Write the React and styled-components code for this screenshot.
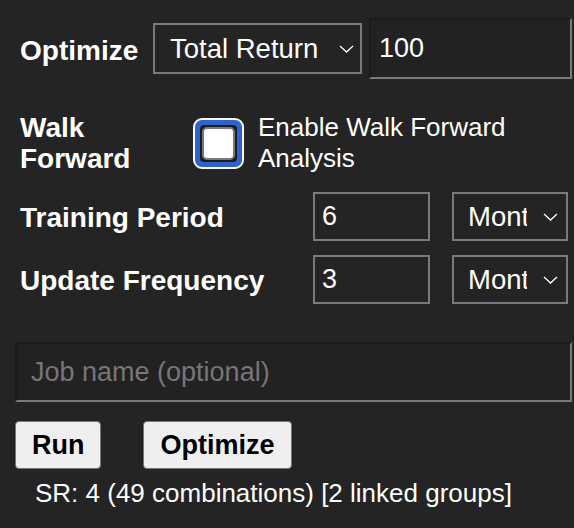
import React from "react";
import styled, { createGlobalStyle } from "styled-components";

const Global = createGlobalStyle`
  html, body { margin: 0; padding: 0; background: #242424; }
  body { font-family: "Liberation Sans", Arial, Helvetica, sans-serif; color: #fff; }
  * { box-sizing: border-box; }
`;

const Panel = styled.div`
  padding: 18px 2px 20px 15px;
  font-size: 26px;
`;

const Row = styled.div`
  display: flex;
  align-items: center;
  margin-top: ${(p) => p.$mt || 0}px;
`;

const Label = styled.div`
  width: ${(p) => p.$w}px;
  flex: none;
  padding-left: 5px;
  padding-top: ${(p) => p.$pt || 0}px;
  font-weight: bold;
  font-size: 28px;
  line-height: 31px;
`;

const SelectWrap = styled.div`
  position: relative;
  flex: none;
  width: ${(p) => p.$w}px;
  height: ${(p) => p.$h}px;
  margin-right: ${(p) => p.$mr || 0}px;
`;

const Select = styled.select`
  appearance: none;
  -webkit-appearance: none;
  width: 100%;
  height: 100%;
  background: #242424;
  color: #fff;
  border: 2px solid #7a7a7a;
  border-radius: 0;
  font: inherit;
  font-size: 27.5px;
  padding: 0 ${(p) => p.$pr}px 0 ${(p) => p.$pl}px;
  outline: none;
  overflow: hidden;
`;

const Chevron = styled.svg`
  position: absolute;
  right: ${(p) => p.$r}px;
  top: 50%;
  margin-top: -4px;
  width: 15px;
  height: 8px;
  pointer-events: none;
`;

const InsetInput = styled.input`
  flex: 1;
  min-width: 0;
  height: ${(p) => p.$h}px;
  background: #222;
  color: #fff;
  border: 2px solid;
  border-top-color: #1c1c1c;
  border-left-color: #1c1c1c;
  border-bottom-color: #7a7a7a;
  border-right-color: #7a7a7a;
  font: inherit;
  font-size: 27px;
  padding: 0 0 0 ${(p) => p.$pl}px;
  outline: none;
  &::placeholder { color: #767676; }
`;

const BoxInput = styled.input`
  flex: none;
  width: ${(p) => p.$w}px;
  height: 49px;
  background: #242424;
  color: #fff;
  border: 2px solid #7a7a7a;
  font: inherit;
  font-size: 27px;
  padding: 0 0 0 7px;
  margin-right: ${(p) => p.$mr || 0}px;
  outline: none;
`;

const CheckOuter = styled.div`
  flex: none;
  width: 51px;
  height: 51px;
  margin-left: 5px;
  margin-right: 14px;
  border: 2px solid #fff;
  border-radius: 9px;
  background: #2c63cf;
  padding: 5px;
`;

const CheckDark = styled.div`
  width: 100%;
  height: 100%;
  background: #1e1e1e;
  border-radius: 4px;
  padding: 2px;
`;

const CheckInner = styled.div`
  width: 100%;
  height: 100%;
  background: #fff;
  border: 2.5px solid #7a7a7a;
  border-radius: 5px;
`;

const CheckText = styled.div`
  line-height: 31px;
`;

const Buttons = styled.div`
  display: flex;
  gap: 42px;
  margin-top: 19px;
`;

const Button = styled.button`
  height: 48px;
  padding: 0 ${(p) => p.$px}px;
  background: #efefef;
  color: #000;
  border: 1.5px solid #767676;
  border-radius: 4px;
  font: inherit;
  font-size: 27px;
  font-weight: bold;
`;

const Status = styled.div`
  margin-top: 9px;
  padding-left: 20px;
  line-height: 31px;
`;

const ChevronIcon = ({ r }) => (
  <Chevron $r={r} viewBox="0 0 15 8">
    <path d="M1 1 L7.5 7 L14 1" fill="none" stroke="#fff" strokeWidth="1.3" />
  </Chevron>
);

export default function App() {
  return (
    <>
      <Global />
      <Panel>
        <Row>
          <Label $w={138} $pt={3}>Optimize</Label>
          <SelectWrap $w={209} $h={51} $mr={7}>
            <Select $pl={15} $pr={40} defaultValue="tr">
              <option value="tr">Total Return</option>
            </Select>
            <ChevronIcon r={8} />
          </SelectWrap>
          <InsetInput $h={61} $pl={8} defaultValue="100" />
        </Row>

        <Row $mt={33}>
          <Label $w={173}>Walk Forward</Label>
          <CheckOuter>
            <CheckDark>
              <CheckInner />
            </CheckDark>
          </CheckOuter>
          <CheckText>Enable Walk Forward Analysis</CheckText>
        </Row>

        <Row $mt={18}>
          <Label $w={298} $pt={1}>Training Period</Label>
          <BoxInput $w={117} $mr={22} defaultValue="6" />
          <SelectWrap $w={116} $h={49}>
            <Select $pl={14} $pr={39} defaultValue="m">
              <option value="m">Months</option>
            </Select>
            <ChevronIcon r={10} />
          </SelectWrap>
        </Row>

        <Row $mt={14}>
          <Label $w={298} $pt={1}>Update Frequency</Label>
          <BoxInput $w={117} $mr={22} defaultValue="3" />
          <SelectWrap $w={116} $h={49}>
            <Select $pl={14} $pr={39} defaultValue="m">
              <option value="m">Months</option>
            </Select>
            <ChevronIcon r={10} />
          </SelectWrap>
        </Row>

        <Row $mt={38}>
          <InsetInput $h={60} $pl={14} placeholder="Job name (optional)" />
        </Row>

        <Buttons>
          <Button $px={16}>Run</Button>
          <Button $px={16}>Optimize</Button>
        </Buttons>

        <Status>SR: 4 (49 combinations) [2 linked groups]</Status>
      </Panel>
    </>
  );
}
